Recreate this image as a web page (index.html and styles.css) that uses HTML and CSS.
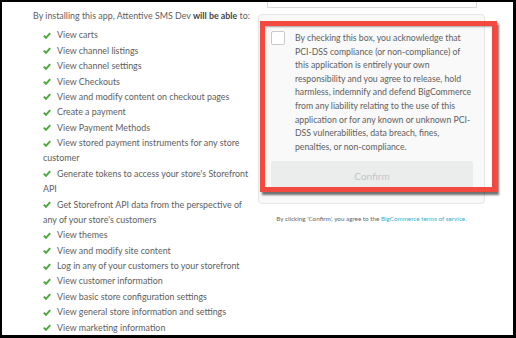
FILE: index.html
```html
<!DOCTYPE html>
<html>
<head>
<meta charset="utf-8">
<link rel="stylesheet" href="styles.css">
</head>
<body>
<div class="frame">
  <div class="scopes">
    <p class="intro">By installing this app, Attentive SMS Dev <strong>will be able</strong> to:</p>
    <ul class="perm-list">
      <li><svg class="check" viewBox="0 0 8 7"><polyline points="0.8,3.6 3,5.8 7.2,1.2"/></svg>View carts</li>
      <li><svg class="check" viewBox="0 0 8 7"><polyline points="0.8,3.6 3,5.8 7.2,1.2"/></svg>View channel listings</li>
      <li><svg class="check" viewBox="0 0 8 7"><polyline points="0.8,3.6 3,5.8 7.2,1.2"/></svg>View channel settings</li>
      <li><svg class="check" viewBox="0 0 8 7"><polyline points="0.8,3.6 3,5.8 7.2,1.2"/></svg>View Checkouts</li>
      <li><svg class="check" viewBox="0 0 8 7"><polyline points="0.8,3.6 3,5.8 7.2,1.2"/></svg>View and modify content on checkout pages</li>
      <li><svg class="check" viewBox="0 0 8 7"><polyline points="0.8,3.6 3,5.8 7.2,1.2"/></svg>Create a payment</li>
      <li><svg class="check" viewBox="0 0 8 7"><polyline points="0.8,3.6 3,5.8 7.2,1.2"/></svg>View Payment Methods</li>
      <li><svg class="check" viewBox="0 0 8 7"><polyline points="0.8,3.6 3,5.8 7.2,1.2"/></svg>View stored payment instruments for any store customer</li>
      <li><svg class="check" viewBox="0 0 8 7"><polyline points="0.8,3.6 3,5.8 7.2,1.2"/></svg>Generate tokens to access your store's Storefront API</li>
      <li><svg class="check" viewBox="0 0 8 7"><polyline points="0.8,3.6 3,5.8 7.2,1.2"/></svg>Get Storefront API data from the perspective of any of your store's customers</li>
      <li><svg class="check" viewBox="0 0 8 7"><polyline points="0.8,3.6 3,5.8 7.2,1.2"/></svg>View themes</li>
      <li><svg class="check" viewBox="0 0 8 7"><polyline points="0.8,3.6 3,5.8 7.2,1.2"/></svg>View and modify site content</li>
      <li><svg class="check" viewBox="0 0 8 7"><polyline points="0.8,3.6 3,5.8 7.2,1.2"/></svg>Log in any of your customers to your storefront</li>
      <li><svg class="check" viewBox="0 0 8 7"><polyline points="0.8,3.6 3,5.8 7.2,1.2"/></svg>View customer information</li>
      <li><svg class="check" viewBox="0 0 8 7"><polyline points="0.8,3.6 3,5.8 7.2,1.2"/></svg>View basic store configuration settings</li>
      <li><svg class="check" viewBox="0 0 8 7"><polyline points="0.8,3.6 3,5.8 7.2,1.2"/></svg>View general store information and settings</li>
      <li><svg class="check" viewBox="0 0 8 7"><polyline points="0.8,3.6 3,5.8 7.2,1.2"/></svg>View marketing information</li>
    </ul>
  </div>
  <div class="side">
    <div class="field"></div>
    <div class="panel">
      <label class="consent">
        <span class="box"></span>
        <span class="consent-text">By checking this box, you acknowledge that<br>PCI-DSS compliance (or non-compliance) of<br>this application is entirely your own<br>responsibility and you agree to release, hold<br>harmless, indemnify and defend BigCommerce<br>from any liability relating to the use of this<br>application or for any known or unknown PCI-<br>DSS vulnerabilities, data breach, fines,<br>penalties, or non-compliance.</span>
      </label>
      <button class="confirm" disabled>Confirm</button>
    </div>
    <p class="terms">By clicking 'Confirm', you agree to the <a href="#">BigCommerce terms of service.</a></p>
  </div>
  <div class="highlight"></div>
</div>
</body>
</html>
```
FILE: styles.css
```css
* { box-sizing: border-box; }
html, body { margin: 0; padding: 0; background: #fff; }
body { font-family: Lato, "Open Sans", sans-serif; color: #5e5e5e; }

.frame {
  position: relative;
  width: 516px;
  height: 338px;
  border-style: solid;
  border-color: #000;
  border-width: 2px 3px 3px 2px;
  background: #fff;
  overflow: hidden;
  display: flex;
}

.scopes {
  width: 256px;
  flex: none;
  padding: 6px 0 0 31px;
}
.intro {
  margin: 0 0 4px;
  font-size: 8.9px;
  line-height: 15.4px;
  white-space: nowrap;
}
.intro strong { color: #454545; font-weight: 700; }

.perm-list {
  list-style: none;
  margin: 0 0 0 10px;
  padding: 0;
  width: 214px;
  font-size: 8.9px;
  line-height: 15.37px;
}
.check {
  display: inline-block;
  width: 8px;
  height: 7px;
  margin-right: 6px;
  vertical-align: -0.5px;
}
.check polyline {
  fill: none;
  stroke: #4da83f;
  stroke-width: 2;
}

.side {
  width: 227px;
  flex: none;
}
.field {
  height: 26px;
  margin: -20px 0 0 9px;
  width: 210px;
  border: 1px solid #d9d9d9;
  background: #fff;
}
.panel {
  margin-top: 6px;
  height: 190px;
  border: 1px solid #e6e6e6;
  border-radius: 4px;
  background: #f9f9f9;
  padding: 16px 11px 0 12px;
}
.consent {
  display: flex;
  gap: 10px;
  align-items: flex-start;
}
.box {
  flex: none;
  width: 14px;
  height: 14px;
  border: 1px solid #c9c9c9;
  border-radius: 2px;
  background: #fff;
}
.consent-text {
  font-size: 8.7px;
  line-height: 13.6px;
  color: #606060;
  white-space: nowrap;
}
.confirm {
  display: block;
  width: 202px;
  height: 30px;
  margin-top: 8px;
  border: none;
  border-radius: 3px;
  background: #ebeded;
  color: #c3c6c6;
  font-family: inherit;
  font-size: 10px;
}
.terms {
  margin: 10px 0 0;
  text-align: center;
  font-size: 6.3px;
  line-height: 10px;
  color: #666;
}
.terms a { color: #3aaecb; text-decoration: none; }

.highlight {
  position: absolute;
  left: 258px;
  top: 19px;
  width: 237px;
  height: 171px;
  border: 5px solid #f4493f;
  box-shadow: 2px 3px 2px rgba(0,0,0,0.55), inset 0 2px 2px -1px rgba(0,0,0,0.35);
  pointer-events: none;
}
```
